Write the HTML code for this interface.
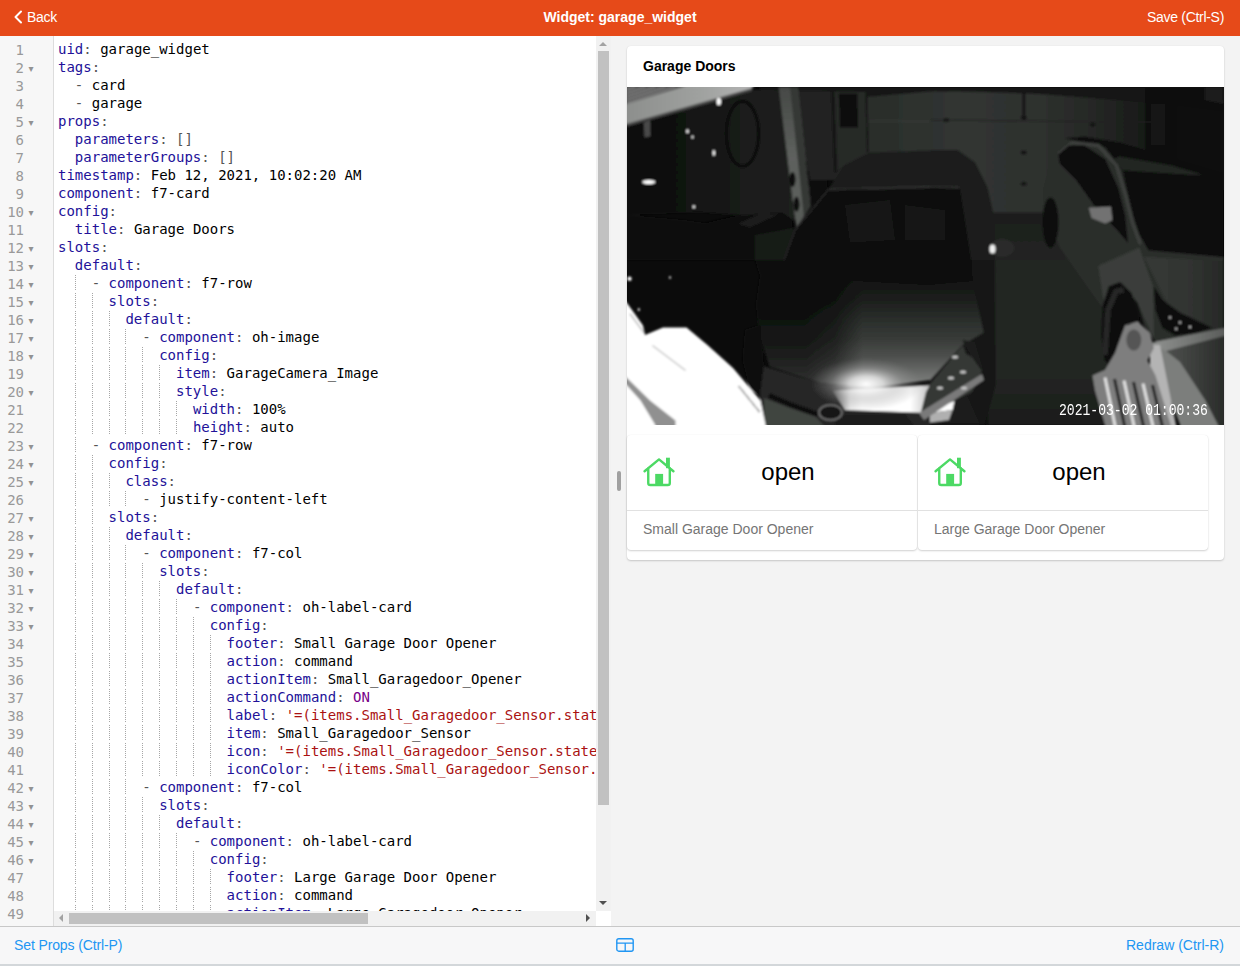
<!DOCTYPE html>
<html><head><meta charset="utf-8"><title>Widget: garage_widget</title>
<style>
*{box-sizing:border-box;margin:0;padding:0}
html,body{width:1240px;height:966px;overflow:hidden;background:#f3f3f3;font-family:"Liberation Sans","DejaVu Sans",sans-serif;}
#nav{position:absolute;left:0;top:0;width:1240px;height:36px;background:#e64a19;color:#fff;font-size:14px}
#nav .back{position:absolute;left:27px;top:0;line-height:34px;letter-spacing:-.25px}
#nav .title{position:absolute;left:0;width:1240px;text-align:center;top:0;line-height:34px;font-weight:bold}
#nav .save{position:absolute;right:16px;top:0;line-height:34px;letter-spacing:-.3px}
#nav svg{position:absolute;left:13.200px;top:9.500px}
#ed{position:absolute;left:0;top:36px;width:611px;height:890px;background:#fff;overflow:hidden}
#gut{position:absolute;left:0;top:0;width:54px;height:890px;background:#f7f7f7;border-right:1px solid #ddd}
#lines{position:absolute;left:0;top:4px;width:596px;height:886px;overflow:hidden}
.l{position:relative;height:18px;white-space:nowrap}
.l .n{position:absolute;left:0;top:1px;width:24px;text-align:right;font:14px/18px "DejaVu Sans Mono","Liberation Mono",monospace;color:#999}
.l b{position:absolute;left:28.600px;top:2px;font:normal 10px/18px "DejaVu Sans","Liberation Sans",sans-serif;color:#929292}
.l pre{position:absolute;left:58px;top:0;font:14px/18px "DejaVu Sans Mono","Liberation Mono",monospace;color:#000}
.a{color:#219}.m{color:#555}.s{color:#a11}.k{color:#708}
i.g{font-style:normal;display:inline-block;height:18px;vertical-align:top;background:repeating-linear-gradient(to bottom,transparent 0,transparent 1px,#a6a6a6 1px,#a6a6a6 2px) 0 0/1px 16px no-repeat}
#vs{position:absolute;left:596px;top:0;width:15px;height:875px;background:#f1f1f1}
#vs .t{position:absolute;left:2px;top:15px;width:11px;height:754px;background:#c1c1c1}
#hs{position:absolute;left:54px;top:875px;width:542px;height:15px;background:#f1f1f1}
#hs .t{position:absolute;left:15px;top:2px;width:299px;height:11px;background:#c1c1c1}
#corner{position:absolute;left:596px;top:875px;width:15px;height:15px;background:#fff}
.ar{position:absolute;width:0;height:0;border:4px solid transparent}
#tb{position:absolute;left:0;top:926px;width:1240px;height:38px;background:#f7f7f8;border-top:1px solid #c8c8c8;color:#2196f3;font-size:14px}
#tb .lft{position:absolute;left:14px;top:0;line-height:36px;letter-spacing:-.12px}
#tb .rgt{position:absolute;right:16px;top:0;line-height:36px}
#tb svg{position:absolute;left:616px;top:10px}
#bot{position:absolute;left:0;top:964px;width:1240px;height:2px;background:#d3d7da}
#handle{position:absolute;left:617px;top:471px;width:4px;height:20px;border-radius:2px;background:#a0a0a0}
#card{position:absolute;left:627px;top:46px;width:597px;height:514px;background:#fff;border-radius:4px;box-shadow:0 1px 2px rgba(0,0,0,.18),0 0 1px rgba(0,0,0,.08)}
#card h3{position:absolute;left:16px;top:0;line-height:40px;font-size:14px;font-weight:bold;color:#000}
#photo{position:absolute;left:0;top:41px;width:597px;height:338px;overflow:hidden}
#ts{position:absolute;left:432px;top:314.500px;color:#fff;font:16px/18px "Liberation Mono","DejaVu Sans Mono",monospace;white-space:pre;transform:scaleX(.816);transform-origin:0 0}
.lc{position:absolute;top:389px;width:290px;height:115px;background:#fff;border-radius:4px;box-shadow:0 1px 2px rgba(0,0,0,.18),0 0 1px rgba(0,0,0,.08)}
.lc .lab{position:absolute;left:0;width:322px;top:17px;text-align:center;font-size:24px;line-height:40px;color:#000}
.lc svg{position:absolute;left:16px;top:22px}
.lc .ft{position:absolute;left:0;top:75px;width:100%;height:40px;border-top:1px solid #e1e1e1;padding-left:16px;line-height:36px;font-size:14px;color:#757575}
</style></head><body>
<div id="nav">
<svg width="10" height="14" viewBox="0 0 10 14"><path d="M8 1.5 2.5 7 8 12.500" fill="none" stroke="#fff" stroke-width="2" stroke-linecap="round" stroke-linejoin="round"/></svg>
<div class="back">Back</div><div class="title">Widget: garage_widget</div><div class="save">Save (Ctrl-S)</div></div>
<div id="ed"><div id="gut"></div><div id="lines">
<div class="l"><span class="n">1</span><pre><span class="a">uid</span><span class="m">:</span> garage_widget</pre></div>
<div class="l"><span class="n">2</span><b>▾</b><pre><span class="a">tags</span><span class="m">:</span></pre></div>
<div class="l"><span class="n">3</span><pre>  <span class="m">- </span>card</pre></div>
<div class="l"><span class="n">4</span><pre>  <span class="m">- </span>garage</pre></div>
<div class="l"><span class="n">5</span><b>▾</b><pre><span class="a">props</span><span class="m">:</span></pre></div>
<div class="l"><span class="n">6</span><pre>  <span class="a">parameters</span><span class="m">:</span> <span class="m">[]</span></pre></div>
<div class="l"><span class="n">7</span><pre>  <span class="a">parameterGroups</span><span class="m">:</span> <span class="m">[]</span></pre></div>
<div class="l"><span class="n">8</span><pre><span class="a">timestamp</span><span class="m">:</span> Feb 12, 2021, 10:02:20 AM</pre></div>
<div class="l"><span class="n">9</span><pre><span class="a">component</span><span class="m">:</span> f7-card</pre></div>
<div class="l"><span class="n">10</span><b>▾</b><pre><span class="a">config</span><span class="m">:</span></pre></div>
<div class="l"><span class="n">11</span><pre>  <span class="a">title</span><span class="m">:</span> Garage Doors</pre></div>
<div class="l"><span class="n">12</span><b>▾</b><pre><span class="a">slots</span><span class="m">:</span></pre></div>
<div class="l"><span class="n">13</span><b>▾</b><pre>  <span class="a">default</span><span class="m">:</span></pre></div>
<div class="l"><span class="n">14</span><b>▾</b><pre>  <i class="g">  </i><span class="m">- </span><span class="a">component</span><span class="m">:</span> f7-row</pre></div>
<div class="l"><span class="n">15</span><b>▾</b><pre>  <i class="g">  </i><i class="g">  </i><span class="a">slots</span><span class="m">:</span></pre></div>
<div class="l"><span class="n">16</span><b>▾</b><pre>  <i class="g">  </i><i class="g">  </i><i class="g">  </i><span class="a">default</span><span class="m">:</span></pre></div>
<div class="l"><span class="n">17</span><b>▾</b><pre>  <i class="g">  </i><i class="g">  </i><i class="g">  </i><i class="g">  </i><span class="m">- </span><span class="a">component</span><span class="m">:</span> oh-image</pre></div>
<div class="l"><span class="n">18</span><b>▾</b><pre>  <i class="g">  </i><i class="g">  </i><i class="g">  </i><i class="g">  </i><i class="g">  </i><span class="a">config</span><span class="m">:</span></pre></div>
<div class="l"><span class="n">19</span><pre>  <i class="g">  </i><i class="g">  </i><i class="g">  </i><i class="g">  </i><i class="g">  </i><i class="g">  </i><span class="a">item</span><span class="m">:</span> GarageCamera_Image</pre></div>
<div class="l"><span class="n">20</span><b>▾</b><pre>  <i class="g">  </i><i class="g">  </i><i class="g">  </i><i class="g">  </i><i class="g">  </i><i class="g">  </i><span class="a">style</span><span class="m">:</span></pre></div>
<div class="l"><span class="n">21</span><pre>  <i class="g">  </i><i class="g">  </i><i class="g">  </i><i class="g">  </i><i class="g">  </i><i class="g">  </i><i class="g">  </i><span class="a">width</span><span class="m">:</span> 100%</pre></div>
<div class="l"><span class="n">22</span><pre>  <i class="g">  </i><i class="g">  </i><i class="g">  </i><i class="g">  </i><i class="g">  </i><i class="g">  </i><i class="g">  </i><span class="a">height</span><span class="m">:</span> auto</pre></div>
<div class="l"><span class="n">23</span><b>▾</b><pre>  <i class="g">  </i><span class="m">- </span><span class="a">component</span><span class="m">:</span> f7-row</pre></div>
<div class="l"><span class="n">24</span><b>▾</b><pre>  <i class="g">  </i><i class="g">  </i><span class="a">config</span><span class="m">:</span></pre></div>
<div class="l"><span class="n">25</span><b>▾</b><pre>  <i class="g">  </i><i class="g">  </i><i class="g">  </i><span class="a">class</span><span class="m">:</span></pre></div>
<div class="l"><span class="n">26</span><pre>  <i class="g">  </i><i class="g">  </i><i class="g">  </i><i class="g">  </i><span class="m">- </span>justify-content-left</pre></div>
<div class="l"><span class="n">27</span><b>▾</b><pre>  <i class="g">  </i><i class="g">  </i><span class="a">slots</span><span class="m">:</span></pre></div>
<div class="l"><span class="n">28</span><b>▾</b><pre>  <i class="g">  </i><i class="g">  </i><i class="g">  </i><span class="a">default</span><span class="m">:</span></pre></div>
<div class="l"><span class="n">29</span><b>▾</b><pre>  <i class="g">  </i><i class="g">  </i><i class="g">  </i><i class="g">  </i><span class="m">- </span><span class="a">component</span><span class="m">:</span> f7-col</pre></div>
<div class="l"><span class="n">30</span><b>▾</b><pre>  <i class="g">  </i><i class="g">  </i><i class="g">  </i><i class="g">  </i><i class="g">  </i><span class="a">slots</span><span class="m">:</span></pre></div>
<div class="l"><span class="n">31</span><b>▾</b><pre>  <i class="g">  </i><i class="g">  </i><i class="g">  </i><i class="g">  </i><i class="g">  </i><i class="g">  </i><span class="a">default</span><span class="m">:</span></pre></div>
<div class="l"><span class="n">32</span><b>▾</b><pre>  <i class="g">  </i><i class="g">  </i><i class="g">  </i><i class="g">  </i><i class="g">  </i><i class="g">  </i><i class="g">  </i><span class="m">- </span><span class="a">component</span><span class="m">:</span> oh-label-card</pre></div>
<div class="l"><span class="n">33</span><b>▾</b><pre>  <i class="g">  </i><i class="g">  </i><i class="g">  </i><i class="g">  </i><i class="g">  </i><i class="g">  </i><i class="g">  </i><i class="g">  </i><span class="a">config</span><span class="m">:</span></pre></div>
<div class="l"><span class="n">34</span><pre>  <i class="g">  </i><i class="g">  </i><i class="g">  </i><i class="g">  </i><i class="g">  </i><i class="g">  </i><i class="g">  </i><i class="g">  </i><i class="g">  </i><span class="a">footer</span><span class="m">:</span> Small Garage Door Opener</pre></div>
<div class="l"><span class="n">35</span><pre>  <i class="g">  </i><i class="g">  </i><i class="g">  </i><i class="g">  </i><i class="g">  </i><i class="g">  </i><i class="g">  </i><i class="g">  </i><i class="g">  </i><span class="a">action</span><span class="m">:</span> command</pre></div>
<div class="l"><span class="n">36</span><pre>  <i class="g">  </i><i class="g">  </i><i class="g">  </i><i class="g">  </i><i class="g">  </i><i class="g">  </i><i class="g">  </i><i class="g">  </i><i class="g">  </i><span class="a">actionItem</span><span class="m">:</span> Small_Garagedoor_Opener</pre></div>
<div class="l"><span class="n">37</span><pre>  <i class="g">  </i><i class="g">  </i><i class="g">  </i><i class="g">  </i><i class="g">  </i><i class="g">  </i><i class="g">  </i><i class="g">  </i><i class="g">  </i><span class="a">actionCommand</span><span class="m">:</span> <span class="k">ON</span></pre></div>
<div class="l"><span class="n">38</span><pre>  <i class="g">  </i><i class="g">  </i><i class="g">  </i><i class="g">  </i><i class="g">  </i><i class="g">  </i><i class="g">  </i><i class="g">  </i><i class="g">  </i><span class="a">label</span><span class="m">:</span> <span class="s">'=(items.Small_Garagedoor_Sensor.state === "CLOSED") ? "closed" : "open"'</span></pre></div>
<div class="l"><span class="n">39</span><pre>  <i class="g">  </i><i class="g">  </i><i class="g">  </i><i class="g">  </i><i class="g">  </i><i class="g">  </i><i class="g">  </i><i class="g">  </i><i class="g">  </i><span class="a">item</span><span class="m">:</span> Small_Garagedoor_Sensor</pre></div>
<div class="l"><span class="n">40</span><pre>  <i class="g">  </i><i class="g">  </i><i class="g">  </i><i class="g">  </i><i class="g">  </i><i class="g">  </i><i class="g">  </i><i class="g">  </i><i class="g">  </i><span class="a">icon</span><span class="m">:</span> <span class="s">'=(items.Small_Garagedoor_Sensor.state === "CLOSED") ? "f7:house_fill" : "f7:house"'</span></pre></div>
<div class="l"><span class="n">41</span><pre>  <i class="g">  </i><i class="g">  </i><i class="g">  </i><i class="g">  </i><i class="g">  </i><i class="g">  </i><i class="g">  </i><i class="g">  </i><i class="g">  </i><span class="a">iconColor</span><span class="m">:</span> <span class="s">'=(items.Small_Garagedoor_Sensor.state === "CLOSED") ? "red" : "green"'</span></pre></div>
<div class="l"><span class="n">42</span><b>▾</b><pre>  <i class="g">  </i><i class="g">  </i><i class="g">  </i><i class="g">  </i><span class="m">- </span><span class="a">component</span><span class="m">:</span> f7-col</pre></div>
<div class="l"><span class="n">43</span><b>▾</b><pre>  <i class="g">  </i><i class="g">  </i><i class="g">  </i><i class="g">  </i><i class="g">  </i><span class="a">slots</span><span class="m">:</span></pre></div>
<div class="l"><span class="n">44</span><b>▾</b><pre>  <i class="g">  </i><i class="g">  </i><i class="g">  </i><i class="g">  </i><i class="g">  </i><i class="g">  </i><span class="a">default</span><span class="m">:</span></pre></div>
<div class="l"><span class="n">45</span><b>▾</b><pre>  <i class="g">  </i><i class="g">  </i><i class="g">  </i><i class="g">  </i><i class="g">  </i><i class="g">  </i><i class="g">  </i><span class="m">- </span><span class="a">component</span><span class="m">:</span> oh-label-card</pre></div>
<div class="l"><span class="n">46</span><b>▾</b><pre>  <i class="g">  </i><i class="g">  </i><i class="g">  </i><i class="g">  </i><i class="g">  </i><i class="g">  </i><i class="g">  </i><i class="g">  </i><span class="a">config</span><span class="m">:</span></pre></div>
<div class="l"><span class="n">47</span><pre>  <i class="g">  </i><i class="g">  </i><i class="g">  </i><i class="g">  </i><i class="g">  </i><i class="g">  </i><i class="g">  </i><i class="g">  </i><i class="g">  </i><span class="a">footer</span><span class="m">:</span> Large Garage Door Opener</pre></div>
<div class="l"><span class="n">48</span><pre>  <i class="g">  </i><i class="g">  </i><i class="g">  </i><i class="g">  </i><i class="g">  </i><i class="g">  </i><i class="g">  </i><i class="g">  </i><i class="g">  </i><span class="a">action</span><span class="m">:</span> command</pre></div>
<div class="l"><span class="n">49</span><pre>  <i class="g">  </i><i class="g">  </i><i class="g">  </i><i class="g">  </i><i class="g">  </i><i class="g">  </i><i class="g">  </i><i class="g">  </i><i class="g">  </i><span class="a">actionItem</span><span class="m">:</span> Large_Garagedoor_Opener</pre></div>
</div>
<div id="vs"><div class="t"></div><div class="ar" style="left:3px;top:6px;border-bottom:4px solid #a3a3a3;border-top:0"></div><div class="ar" style="left:3px;top:865px;border-top:4px solid #505050;border-bottom:0"></div></div>
<div id="hs"><div class="t"></div><div class="ar" style="left:5px;top:3px;border-right:4px solid #a3a3a3;border-left:0"></div><div class="ar" style="left:532px;top:3px;border-left:4px solid #505050;border-right:0"></div></div>
<div id="corner"></div>
</div>
<div id="handle"></div>
<div id="card"><h3>Garage Doors</h3>
<div id="photo"><svg width="597" height="338" viewBox="0 0 597 338" style="display:block"><defs><filter id="pbl" x="-5%" y="-5%" width="110%" height="110%"><feGaussianBlur stdDeviation="1.1"/></filter></defs><rect width="597" height="338" fill="#0b0b0b"/><g filter="url(#pbl)">
<defs>
<linearGradient id="pgd" x1="0" x2="1"><stop offset="0" stop-color="#2a2d2a"/><stop offset=".3" stop-color="#313532"/><stop offset=".55" stop-color="#2e312e"/><stop offset=".72" stop-color="#262826"/><stop offset=".88" stop-color="#191b19"/><stop offset="1" stop-color="#121312"/></linearGradient>
<linearGradient id="pfl" x1="0" x2="0" y1="0" y2="1"><stop offset="0" stop-color="#1c1e1c"/><stop offset=".3" stop-color="#242724"/><stop offset=".75" stop-color="#232623"/><stop offset="1" stop-color="#1b1d1b"/></linearGradient>
<linearGradient id="phd" gradientUnits="userSpaceOnUse" x1="0" x2="0" y1="190" y2="301"><stop offset="0" stop-color="#131313"/><stop offset=".2" stop-color="#1c1e1c"/><stop offset=".38" stop-color="#2a2e2b"/><stop offset=".56" stop-color="#383b38"/><stop offset=".72" stop-color="#4e504e"/><stop offset=".86" stop-color="#6a6c6a"/><stop offset="1" stop-color="#858785"/></linearGradient>
<linearGradient id="phl" gradientUnits="userSpaceOnUse" x1="180" x2="236" y1="0" y2="0"><stop offset="0" stop-color="#000" stop-opacity=".62"/><stop offset=".5" stop-color="#000" stop-opacity=".45"/><stop offset="1" stop-color="#000" stop-opacity="0"/></linearGradient>
<radialGradient id="phs"><stop offset="0" stop-color="#fff" stop-opacity="1"/><stop offset=".3" stop-color="#eee" stop-opacity=".8"/><stop offset=".65" stop-color="#aaa" stop-opacity=".35"/><stop offset="1" stop-color="#888" stop-opacity="0"/></radialGradient>
<linearGradient id="pbb" x1="0" x2="1"><stop offset="0" stop-color="#444"/><stop offset=".18" stop-color="#e8e8e8"/><stop offset=".3" stop-color="#fff"/><stop offset=".8" stop-color="#fff"/><stop offset="1" stop-color="#c0c0c0"/></linearGradient>
<linearGradient id="psf" x1="0" x2="1"><stop offset="0" stop-color="#8a8c8a"/><stop offset=".6" stop-color="#a0a2a0"/><stop offset="1" stop-color="#b6b6b6"/></linearGradient>
<linearGradient id="ppl" x1="0" x2="0" y1="0" y2="1"><stop offset="0" stop-color="#464946"/><stop offset=".5" stop-color="#5e615e"/><stop offset="1" stop-color="#585b58"/></linearGradient>
<linearGradient id="pbw" gradientUnits="userSpaceOnUse" x1="0" x2="165" y1="0" y2="0"><stop offset="0" stop-color="#0d0d0d"/><stop offset=".45" stop-color="#131413"/><stop offset=".7" stop-color="#1a1c1a"/><stop offset="1" stop-color="#1e201e"/></linearGradient>
<linearGradient id="pbi" gradientUnits="userSpaceOnUse" x1="540" x2="597" y1="0" y2="0"><stop offset="0" stop-color="#4e504e"/><stop offset="1" stop-color="#2a2c2a"/></linearGradient>
<linearGradient id="pbr" gradientUnits="userSpaceOnUse" x1="527" x2="597" y1="0" y2="0"><stop offset="0" stop-color="#8e908e"/><stop offset="1" stop-color="#5c5e5c"/></linearGradient>
<linearGradient id="psh" x1="0" x2="1"><stop offset="0" stop-color="#363936"/><stop offset=".5" stop-color="#323532"/><stop offset="1" stop-color="#272927"/></linearGradient>
</defs>
<polygon points="0.0,3.0 153.0,3.0 165.0,113.0 168.0,133.0 123.0,129.0 73.0,125.0 0.0,128.0" fill="url(#pbw)" />
<polygon points="0.0,128.0 55.5,133.0 128.0,143.0 128.0,173.0 0.0,173.0" fill="#101010" />
<polygon points="168.0,0.0 243.0,0.0 243.0,68.0 218.0,78.0 208.0,93.0 183.0,93.0 178.0,68.0" fill="#222422" />
<polygon points="208.0,3.0 240.5,3.0 240.5,66.8 218.0,78.0 210.5,83.0" fill="#272927" />
<rect x="240.5" y="4.2" width="310.0" height="122.5" fill="url(#pgd)"/>
<polygon points="133.0,0.0 243.0,0.0 243.0,5.0 133.0,3.0" fill="#141414" />
<polygon points="239.0,0.0 597.0,0.0 597.0,25.0 528.0,16.0 413.0,7.0 313.0,3.5 239.0,10.0" fill="#141514" />
<polygon points="518.0,0.0 596.8,0.0 596.8,103.0 518.0,68.0" fill="#0c0c0c" opacity=".8"/>
<polygon points="524.2,16.8 538.0,16.8 538.0,58.0 524.2,58.0" fill="#161616" />
<polygon points="578.0,0.0 596.8,0.0 596.8,16.8 578.0,13.0" fill="#1e1e1e" />
<rect x="360.5" y="125.5" width="132.5" height="212.5" fill="url(#pfl)"/>
<polyline points="240.5,34.2 303.0,34.2" fill="none" stroke="#383b38" stroke-width="1.2" stroke-linejoin="round" />
<polyline points="303.0,33.0 523.0,35.0" fill="none" stroke="#222" stroke-width="1.2" stroke-linejoin="round" />
<polyline points="396.8,3.0 396.8,33.0" fill="none" stroke="#141414" stroke-width="3.0" stroke-linejoin="round" />
<ellipse cx="396.8" cy="65.5" rx="3.0" ry="2.0" fill="#141414" />
<ellipse cx="396.8" cy="96.8" rx="3.0" ry="2.0" fill="#141414" />
<ellipse cx="319.2" cy="33.0" rx="3.0" ry="2.0" fill="#141414" />
<ellipse cx="465.5" cy="37.5" rx="3.0" ry="2.0" fill="#141414" />
<ellipse cx="396.8" cy="30.5" rx="3.0" ry="2.0" fill="#141414" />
<polyline points="205.5,3.0 208.5,85.5" fill="none" stroke="#121212" stroke-width="3.0" stroke-linejoin="round" />
<polyline points="239.2,3.0 241.0,65.5" fill="none" stroke="#181818" stroke-width="2.0" stroke-linejoin="round" />
<polygon points="211.8,6.8 230.5,6.8 231.0,40.5 213.0,40.5" fill="#0a0a0a" />
<polygon points="180.5,93.0 200.5,93.0 200.5,110.5 183.0,118.0" fill="#080808" />
<ellipse cx="115.5" cy="46.8" rx="16.2" ry="32.5" fill="none" stroke="#0b0b0b" stroke-width="3.500"/>
<polygon points="105.5,129.2 155.5,125.5 165.5,133.0 165.5,153.0 128.0,173.0 43.0,173.0 48.0,143.0" fill="#070707" />
<polygon points="110.5,136.8 133.0,126.8 153.0,126.8 123.0,140.5" fill="#1c1c1c" />
<polygon points="128.0,148.0 168.0,140.5 158.0,173.0 128.0,173.0" fill="#191a19" />
<polygon points="-9.5,-7.0 75.5,-7.0 -9.5,21.0" fill="#585858" />
<polyline points="0.0,3.0 8.0,0.0" fill="none" stroke="#8c8c8c" stroke-width="1.2" stroke-linejoin="round" />
<polyline points="0.0,6.2 18.0,0.0" fill="none" stroke="#8c8c8c" stroke-width="1.2" stroke-linejoin="round" />
<polyline points="0.0,9.5 28.0,0.0" fill="none" stroke="#8c8c8c" stroke-width="1.2" stroke-linejoin="round" />
<polyline points="0.0,12.8 38.0,0.0" fill="none" stroke="#8c8c8c" stroke-width="1.2" stroke-linejoin="round" />
<polyline points="0.0,16.0 48.0,0.0" fill="none" stroke="#8c8c8c" stroke-width="1.2" stroke-linejoin="round" />
<polygon points="-10.0,20.0 55.0,0.0 73.0,-7.0 133.0,-7.0 126.0,0.0 123.0,3.0 -10.0,40.3" fill="url(#psf)" />
<polyline points="0.0,38.0 125.0,2.5" fill="none" stroke="#4a4a4a" stroke-width="2.5" stroke-linejoin="round" />
<polygon points="16.8,35.5 23.0,33.0 23.5,49.2 17.5,50.5" fill="#4a4a4a" />
<polygon points="151.8,0.0 171.0,0.0 183.5,119.2 169.5,141.0 165.5,113.0" fill="url(#ppl)" />
<polygon points="163.0,0.0 171.0,0.0 183.5,119.2 176.8,129.2" fill="#343734" />
<ellipse cx="165.5" cy="92.5" rx="3.0" ry="7.5" fill="#0c0c0c" />
<ellipse cx="169.5" cy="117.2" rx="3.0" ry="7.5" fill="#0c0c0c" />
<polygon points="303.0,63.0 330.5,63.0 348.0,75.5 360.5,100.5 366.8,128.0 368.0,173.0 303.0,173.0" fill="#1b1d1b" />
<polygon points="303.0,173.0 368.0,173.0 368.5,298.0 358.0,337.5 303.0,337.5" fill="#131413" />
<polygon points="303.0,63.5 243.0,65.5 218.0,78.0 201.0,102.5 303.0,99.2" fill="#1c1e1c" />
<polygon points="303.0,63.5 329.2,63.5 332.5,100.5 303.0,99.5" fill="#1b1d1b" />
<polyline points="201.0,102.5 303.0,99.8" fill="none" stroke="#3a3a3a" stroke-width="1.0" stroke-linejoin="round" />
<polyline points="303.0,99.8 332.5,100.5" fill="none" stroke="#3a3a3a" stroke-width="1.0" stroke-linejoin="round" />
<polygon points="201.0,103.5 303.0,100.8 303.0,173.0 158.0,173.0 169.2,143.0" fill="#0e0e0e" />
<polygon points="303.0,100.8 333.0,101.5 344.2,173.0 303.0,173.0" fill="#0e0e0e" />
<polygon points="128.0,173.0 303.0,173.0 303.0,198.0 133.0,188.5" fill="#0c0c0c" />
<polygon points="303.0,173.0 344.2,173.0 345.5,194.2 303.0,198.0" fill="#0d0d0d" />
<polygon points="218.0,118.0 263.0,113.0 268.0,153.0 223.0,155.5" fill="#151615" />
<polygon points="278.0,118.0 318.0,123.0 318.0,153.0 278.0,153.0" fill="#141514" />
<polyline points="201.0,103.0 168.0,143.0 156.8,173.0" fill="none" stroke="#202020" stroke-width="2.2" stroke-linejoin="round" />
<polygon points="133.0,188.5 303.0,198.0 345.5,194.2 356.8,245.5 335.5,258.0 303.0,293.0 243.0,301.0 193.0,295.5 143.0,279.2 133.0,248.0 129.2,218.0" fill="url(#phd)" />
<polygon points="133.0,188.5 303.0,198.0 345.5,194.2 356.8,245.5 335.5,258.0 303.0,293.0 243.0,301.0 193.0,295.5 143.0,279.2 133.0,248.0 129.2,218.0" fill="url(#phl)" />
<polygon points="118.0,243.0 133.0,238.0 136.8,278.0 138.0,309.2 123.0,303.0 115.5,273.0" fill="#0e0e0e" />
<polygon points="136.8,279.2 193.0,296.0 243.0,301.5 303.0,296.0 303.0,348.0 139.2,348.0 133.0,308.0" fill="#262626" />
<polygon points="303.0,296.0 303.0,337.5 353.0,337.5 340.5,309.2 303.0,323.0" fill="#1c1e1c" />
<polygon points="205.5,303.5 303.0,298.5 303.0,326.0 218.0,323.0" fill="url(#pbb)" />
<polygon points="303.0,298.5 332.5,290.5 325.5,323.0 303.0,326.0" fill="#fff" />
<polygon points="303.0,326.0 325.5,323.0 321.8,333.0 303.0,335.5" fill="#b0b0b0" />
<polygon points="137.0,311.0 163.0,321.0 189.0,330.0 205.0,348.0 137.0,348.0" fill="#414441" />
<polyline points="142.0,308.5 163.0,317.5 191.0,327.5" fill="none" stroke="#0b0b0b" stroke-width="5.0" stroke-linejoin="round" />
<polygon points="211.0,327.5 278.0,327.0 295.0,348.0 205.0,348.0" fill="#1a1b1a" />
<ellipse cx="203.5" cy="325.5" rx="11.5" ry="7.5" fill="#181818" stroke="#777" stroke-width="1.500"/>
<ellipse cx="239.2" cy="297.0" rx="56" ry="26" fill="url(#phs)"/>
<polygon points="304.0,296.0 336.0,258.0 339.0,267.0 345.0,270.0 355.0,284.0 345.0,305.0 325.0,315.0 294.0,325.0 299.0,305.0" fill="#363936" />
<polygon points="335.0,253.0 348.0,255.0 357.0,285.0 345.0,270.0" fill="#1c1e1c" />
<polygon points="292.0,326.0 355.0,287.0 357.0,293.0 297.0,333.0" fill="#7a7a7a" />
<ellipse cx="328.0" cy="270.0" rx="3.0" ry="1.6" fill="#c8c8c8" />
<ellipse cx="324.0" cy="291.0" rx="3.0" ry="1.6" fill="#c8c8c8" />
<ellipse cx="336.0" cy="285.0" rx="3.0" ry="1.6" fill="#c8c8c8" />
<ellipse cx="313.0" cy="301.0" rx="3.0" ry="1.6" fill="#c8c8c8" />
<ellipse cx="337.0" cy="301.0" rx="3.0" ry="1.6" fill="#c8c8c8" />
<ellipse cx="374.8" cy="161.0" rx="12.5" ry="9.0" fill="#2a2c2a" />
<ellipse cx="365.5" cy="162.0" rx="3.0" ry="4.5" fill="#f0f0f0" />
<polygon points="416.7,124.1 416.7,101.3 424.6,74.0 437.2,51.2 457.7,50.1 478.2,60.3 494.1,83.1 503.2,119.6 512.3,146.9 521.5,162.8 596.6,169.7 596.6,263.1 537.4,263.1 526.0,251.7 516.9,238.0 510.1,215.2 494.1,197.0 478.2,224.3 471.3,215.2 432.6,160.6" fill="#2a2d2a" />
<polygon points="516.9,169.7 596.6,174.2 596.6,251.7 562.5,238.0 539.7,215.2 530.6,197.0" fill="url(#psh)" />
<polygon points="478.2,224.3 494.1,197.0 510.1,215.2 527.1,251.7 526.0,199.3 512.3,160.6 471.3,178.8" fill="#3a3d3a" />
<polygon points="437.2,51.2 457.7,49.4 494.1,55.8 596.6,85.4 596.6,101.3 562.5,87.7 496.4,83.1 478.2,60.3" fill="#101010" />
<polygon points="491.8,69.4 544.2,78.6 576.1,87.7 562.5,88.1 496.4,83.6 487.3,71.7" fill="#232523" />
<polyline points="431.5,67.2 445.1,55.8 471.3,58.5 489.6,78.6 498.7,108.2 505.5,135.5 513.5,157.1" fill="none" stroke="#3c3f3c" stroke-width="3.6" stroke-linejoin="round" />
<polygon points="431.5,67.2 441.7,58.5 457.7,58.5 478.2,72.2 491.4,101.3 498.2,128.7 500.9,156.0 489.6,142.3 471.3,124.1 448.6,92.2 432.6,76.3" fill="#080808" />
<polygon points="496.4,83.6 562.5,88.1 596.6,99.5 596.6,170.1 521.5,163.3 512.8,146.9 503.7,119.6" fill="#080808" />
<ellipse cx="423.5" cy="135.5" rx="8.0" ry="25.1" fill="#0e0f0e" />
<polygon points="461.8,120.7 483.9,119.6 485.5,133.2 478.2,136.6 464.5,130.9" fill="#727272" />
<polygon points="475.5,219.2 481.8,199.2 493.0,195.0 504.2,205.5 511.0,223.0 513.5,238.5 500.5,235.5 493.0,255.5 483.0,279.2 477.5,273.0 474.2,248.0" fill="#0c0c0c" />
<polyline points="478.0,268.0 481.0,223.0 489.2,204.2 496.8,203.0" fill="none" stroke="#262826" stroke-width="5.5" stroke-linejoin="round" />
<polygon points="526.8,199.2 535.5,213.0 553.0,225.5 585.5,241.0 568.0,246.0 548.0,248.5 535.5,241.0 528.5,223.0" fill="#0e0e0e" />
<ellipse cx="543.0" cy="230.5" rx="1.2" ry="1.2" fill="#bbb" />
<ellipse cx="553.0" cy="235.5" rx="1.2" ry="1.2" fill="#bbb" />
<ellipse cx="563.0" cy="240.0" rx="1.2" ry="1.2" fill="#bbb" />
<ellipse cx="549.2" cy="241.8" rx="1.2" ry="1.2" fill="#bbb" />
<polygon points="523.0,256.0 605.5,240.5 605.5,348.0 555.5,348.0 553.0,337.5 528.0,273.0" fill="#7c7e7c" />
<polygon points="525.0,255.5 607.0,239.0 607.0,247.0 539.0,264.5" fill="url(#pbr)" />
<polygon points="539.0,264.0 597.0,249.0 607.0,247.0 607.0,348.0 595.0,348.0 591.0,338.0 578.0,313.0 553.0,275.0" fill="url(#pbi)" />
<polygon points="523.0,258.0 533.0,258.0 549.0,338.0 551.0,348.0 541.0,348.0 539.0,338.0 523.0,283.0" fill="#b4b4b4" />
<polygon points="465.5,288.5 478.0,283.0 488.0,266.0 498.0,238.5 510.5,234.5 523.0,246.0 526.8,261.0 520.5,273.5 528.5,288.5 543.5,337.5 545.5,348.0 479.2,348.0 478.0,337.5 468.0,303.5" fill="#7e7e7e" />
<polyline points="478.0,290.5 490.0,348.0" fill="none" stroke="#e0e0e0" stroke-width="3.0" stroke-linejoin="round" />
<polyline points="487.5,292.0 499.5,348.0" fill="none" stroke="#222" stroke-width="3.0" stroke-linejoin="round" />
<polyline points="497.0,293.5 509.0,348.0" fill="none" stroke="#e0e0e0" stroke-width="3.0" stroke-linejoin="round" />
<polyline points="506.5,295.0 518.5,348.0" fill="none" stroke="#222" stroke-width="3.0" stroke-linejoin="round" />
<polyline points="516.0,296.5 528.0,348.0" fill="none" stroke="#e0e0e0" stroke-width="3.0" stroke-linejoin="round" />
<polyline points="525.5,298.0 537.5,348.0" fill="none" stroke="#222" stroke-width="3.0" stroke-linejoin="round" />
<ellipse cx="506.8" cy="253.0" rx="7.5" ry="10.5" fill="#555" />
<polygon points="-12.0,199.2 0.0,216.0 16.0,238.5 18.0,248.0 36.0,240.5 59.5,240.5 81.0,258.5 106.0,281.0 133.5,313.5 138.5,337.5 140.5,348.0 -12.0,348.0" fill="#ffffff" />
<polygon points="-12.0,279.2 0.0,291.0 23.0,313.5 48.5,333.5 48.5,348.0 30.5,348.0 28.0,337.5 13.5,313.5 0.0,298.5 -12.0,286.8" fill="#909090" />
<polyline points="25.5,258.5 58.5,283.5" fill="none" stroke="#c4c4c4" stroke-width="1.5" stroke-linejoin="round" />
<polyline points="3.0,226.8 16.8,245.5" fill="none" stroke="#bdbdbd" stroke-width="1.5" stroke-linejoin="round" />
<polyline points="111.8,299.2 133.0,325.5" fill="none" stroke="#333" stroke-width="1.8" stroke-linejoin="round" stroke-dasharray="1 1"/>
<ellipse cx="91.8" cy="14.5" rx="2.2" ry="3.8" fill="#fff" />
<ellipse cx="60.5" cy="44.2" rx="1.2" ry="2.0" fill="#fff" />
<ellipse cx="65.5" cy="50.0" rx="1.0" ry="1.5" fill="#fff" />
<ellipse cx="86.8" cy="66.0" rx="1.2" ry="3.0" fill="#fff" />
<ellipse cx="21.8" cy="95.0" rx="6.5" ry="2.0" fill="#fff" />
<ellipse cx="66.8" cy="119.8" rx="1.2" ry="1.5" fill="#fff" />
<ellipse cx="2.5" cy="191.8" rx="2.2" ry="2.2" fill="#fff" />
<ellipse cx="43.0" cy="190.5" rx="1.0" ry="1.2" fill="#fff" />
<ellipse cx="11.8" cy="222.5" rx="1.0" ry="1.5" fill="#fff" />
</g></svg><div id="ts">2021-03-02 01:00:36</div></div>
<div class="lc" style="left:0"><svg width="32" height="30" viewBox="0 0 32 30"><path d="M1.600 14.200 16 2.400 30.400 14.200M5.250 11V25.900a2.050 2.050 0 0 0 2.050 2.050H24.750a2.050 2.050 0 0 0 2.050-2.050V11" fill="none" stroke="#4cd964" stroke-width="2.400" stroke-linejoin="round" stroke-linecap="round"/><rect x="23" y=".7" width="3.900" height="10.500" fill="#4cd964"/><rect x="12.200" y="16.900" width="7.900" height="11" fill="#4cd964"/></svg><div class="lab">open</div><div class="ft">Small Garage Door Opener</div></div>
<div class="lc" style="left:291px"><svg width="32" height="30" viewBox="0 0 32 30"><path d="M1.600 14.200 16 2.400 30.400 14.200M5.250 11V25.900a2.050 2.050 0 0 0 2.050 2.050H24.750a2.050 2.050 0 0 0 2.050-2.050V11" fill="none" stroke="#4cd964" stroke-width="2.400" stroke-linejoin="round" stroke-linecap="round"/><rect x="23" y=".7" width="3.900" height="10.500" fill="#4cd964"/><rect x="12.200" y="16.900" width="7.900" height="11" fill="#4cd964"/></svg><div class="lab">open</div><div class="ft">Large Garage Door Opener</div></div>
</div>
<div id="tb"><div class="lft">Set Props (Ctrl-P)</div>
<svg width="19" height="15" viewBox="0 0 19 15"><rect x=".8" y="1.760" width="16.400" height="12.440" rx="2" fill="none" stroke="#2196f3" stroke-width="1.400"/><path d="M.8 6.200h16.400M9.200 6.200v8" fill="none" stroke="#2196f3" stroke-width="1.300"/></svg>
<div class="rgt">Redraw (Ctrl-R)</div></div>
<div id="bot"></div>
</body></html>
